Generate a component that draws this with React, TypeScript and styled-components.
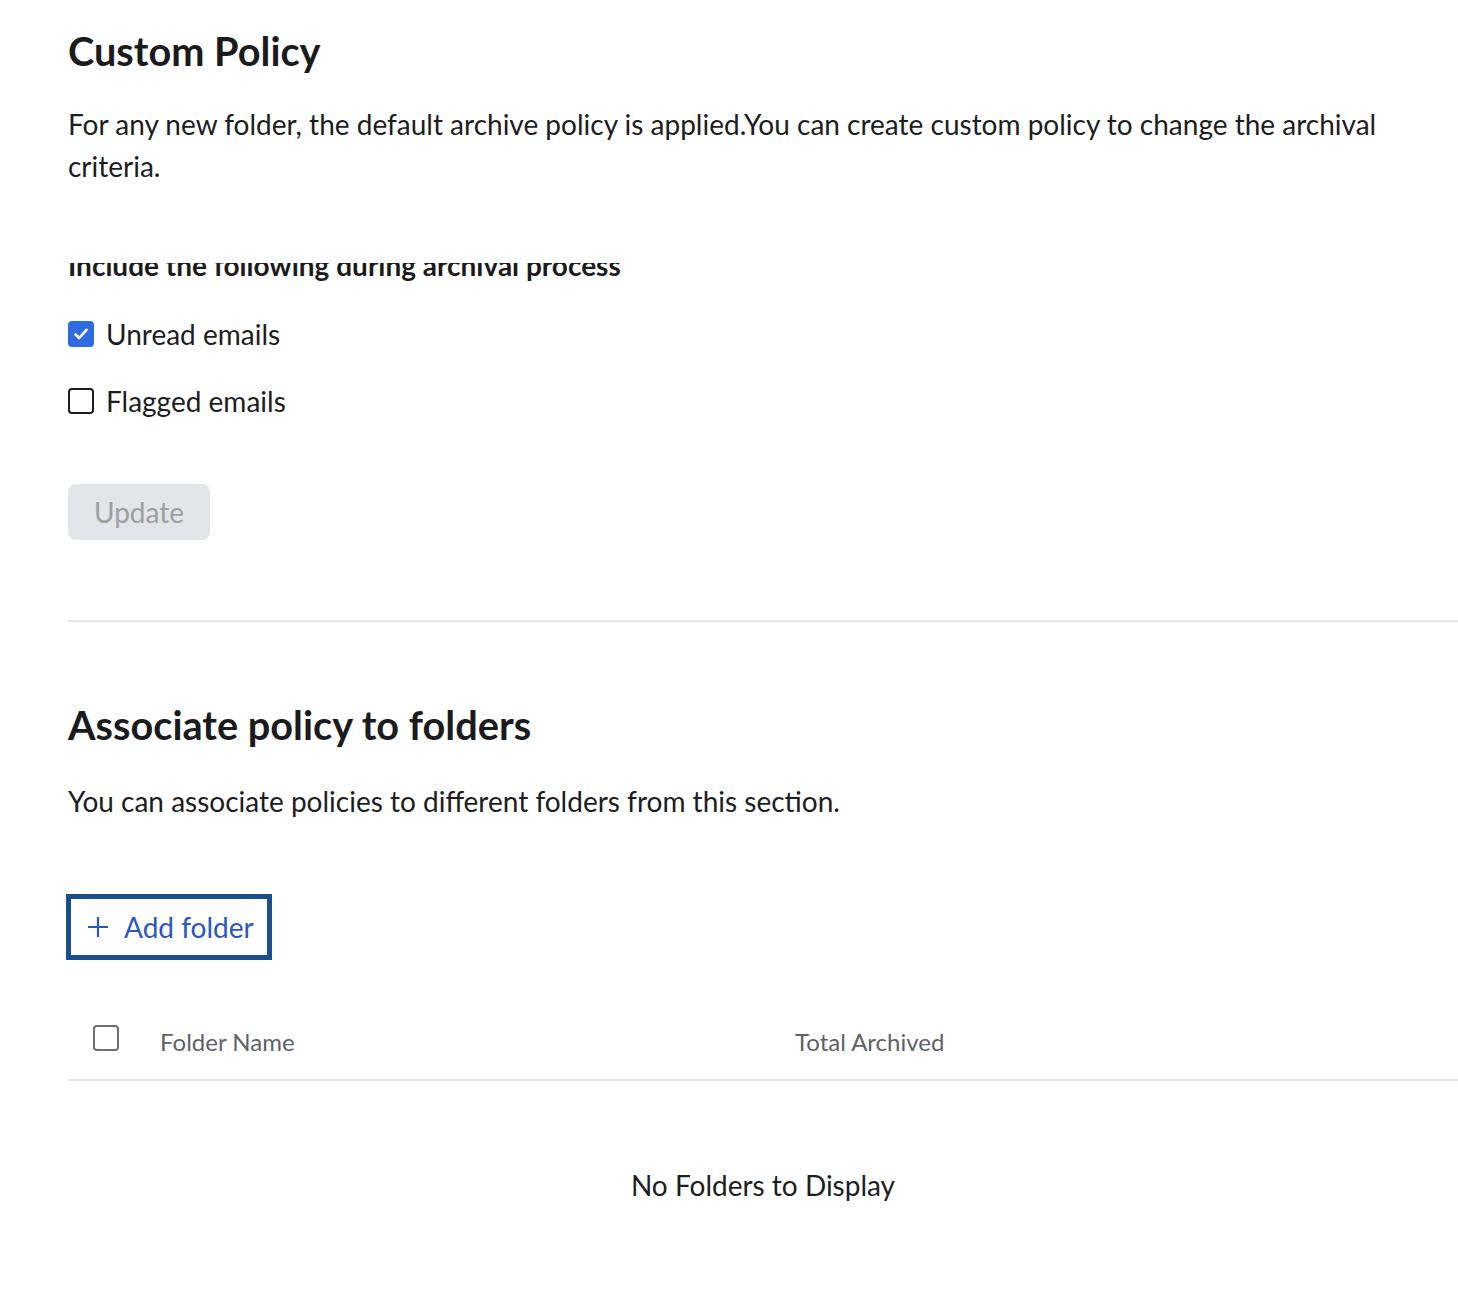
import React from "react";
import styled, { createGlobalStyle } from "styled-components";

const GlobalStyle = createGlobalStyle`
  html, body { margin: 0; padding: 0; background: #ffffff; }
  body { font-family: Lato, "Open Sans", Arial, sans-serif; color: #1d1d1f; }
  * { box-sizing: border-box; }
`;

const Page = styled.main`
  padding: 27px 0 40px 68px;
  display: flex;
  flex-direction: column;
`;

const Title = styled.h1`
  margin: 0;
  font-size: 39.7px;
  line-height: 48px;
  font-weight: 700;
  color: #1b1b1d;
`;

const Description = styled.p<{ $gap: number }>`
  margin: ${(p) => p.$gap}px 0 0;
  font-size: 28px;
  line-height: 42px;
  font-weight: 400;
  color: #1d1d1f;
  padding-right: 60px;
`;

const OptionsViewport = styled.div`
  margin-top: 76px;
  overflow: hidden;
  display: flex;
  flex-direction: column;
`;

const OptionsHeading = styled.h3`
  margin: -14px 0 0;
  font-size: 28px;
  line-height: 1.2;
  font-weight: 700;
  color: #1b1b1d;
`;

const OptionList = styled.div`
  margin-top: 31px;
  display: flex;
  flex-direction: column;
  gap: 27px;
`;

const OptionRow = styled.label`
  display: flex;
  align-items: center;
  gap: 12px;
  height: 40px;
  font-size: 28px;
  color: #1d1d1f;
  cursor: pointer;
`;

const Box = styled.span<{ $checked?: boolean; $muted?: boolean }>`
  flex: none;
  width: 26px;
  height: 26px;
  border-radius: 4px;
  display: inline-flex;
  align-items: center;
  justify-content: center;
  background: ${(p) => (p.$checked ? "#2f6be0" : "#ffffff")};
  border: 2px solid
    ${(p) => (p.$checked ? "#2f6be0" : p.$muted ? "#6d6e73" : "#1d1d1f")};
`;

const Checkbox = ({ checked, muted }: { checked?: boolean; muted?: boolean }) => (
  <Box $checked={checked} $muted={muted}>
    {checked && (
      <svg width="18" height="18" viewBox="0 0 18 18" fill="none">
        <path
          d="M3.5 9.5 L7.2 13 L14.5 4.8"
          stroke="#ffffff"
          strokeWidth="2.6"
          strokeLinecap="round"
          strokeLinejoin="round"
        />
      </svg>
    )}
  </Box>
);

const UpdateButton = styled.button`
  margin-top: 63px;
  align-self: flex-start;
  width: 142px;
  height: 56px;
  border: none;
  border-radius: 8px;
  background: #e4e5e8;
  color: #9c9ea4;
  font-family: inherit;
  font-size: 28px;
  cursor: not-allowed;
`;

const Divider = styled.hr`
  margin: 80px 0 0;
  border: none;
  height: 2px;
  background: #e6e6e6;
`;

const SectionTitle = styled(Title)`
  margin-top: 79px;
`;

const AddButton = styled.button`
  margin-top: 74px;
  align-self: flex-start;
  height: 62px;
  width: 202px;
  padding: 0 0 0 19px;
  display: inline-flex;
  align-items: center;
  gap: 15px;
  background: #ffffff;
  border: none;
  outline: 5px solid #1a4f8f;
  outline-offset: -3px;
  color: #2a57c5;
  font-family: inherit;
  font-size: 28px;
  cursor: pointer;
`;

const Table = styled.div`
  margin-top: 46px;
  display: flex;
  flex-direction: column;
`;

const HeaderRow = styled.div`
  display: grid;
  grid-template-columns: 92px 635px 1fr;
  align-items: center;
  height: 77px;
  border-bottom: 2px solid #e6e6e6;
`;

const CheckCell = styled.div`
  padding-left: 25px;
  display: flex;
  align-items: center;
  margin-top: -6px;
`;

const HeaderCell = styled.div`
  font-size: 24px;
  color: #5f6168;
`;

const EmptyState = styled.div`
  padding: 87px 0 60px;
  text-align: center;
  font-size: 28px;
  color: #1d1d1f;
`;

export default function App() {
  return (
    <>
      <GlobalStyle />
      <Page>
        <Title>Custom Policy</Title>
        <Description $gap={28}>
          For any new folder, the default archive policy is applied.You can create custom policy to
          change the archival criteria.
        </Description>

        <OptionsViewport>
          <OptionsHeading>Include the following during archival process</OptionsHeading>
          <OptionList>
            <OptionRow>
              <Checkbox checked />
              Unread emails
            </OptionRow>
            <OptionRow>
              <Checkbox />
              Flagged emails
            </OptionRow>
          </OptionList>
        </OptionsViewport>

        <UpdateButton disabled>Update</UpdateButton>

        <Divider />

        <SectionTitle as="h2">Associate policy to folders</SectionTitle>
        <Description $gap={31}>
          You can associate policies to different folders from this section.
        </Description>

        <AddButton>
          <svg width="22" height="22" viewBox="0 0 22 22" fill="none">
            <path d="M11 1 V21 M1 11 H21" stroke="#2a57c5" strokeWidth="2.2" />
          </svg>
          Add folder
        </AddButton>

        <Table>
          <HeaderRow>
            <CheckCell>
              <Checkbox muted />
            </CheckCell>
            <HeaderCell>Folder Name</HeaderCell>
            <HeaderCell>Total Archived</HeaderCell>
          </HeaderRow>
          <EmptyState>No Folders to Display</EmptyState>
        </Table>
      </Page>
    </>
  );
}
